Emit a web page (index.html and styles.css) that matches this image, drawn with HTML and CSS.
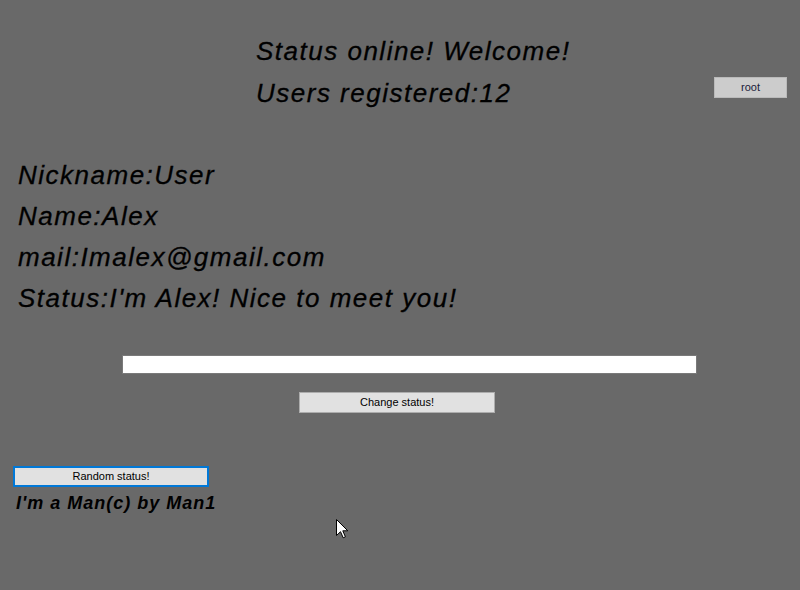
FILE: index.html
```html
<!DOCTYPE html>
<html>
<head>
<meta charset="utf-8">
<link rel="stylesheet" href="styles.css">
</head>
<body>
<div class="form">
  <div class="header">
    <div class="welcome">
      <div class="big head-line">Status online! Welcome!</div>
      <div class="big head-line">Users registered:12</div>
    </div>
    <button class="btn root">root</button>
  </div>
  <div class="info">
    <div class="big">Nickname:User</div>
    <div class="big">Name:Alex</div>
    <div class="big">mail:Imalex@gmail.com</div>
    <div class="big">Status:I'm Alex! Nice to meet you!</div>
  </div>
  <div class="status-row">
    <input class="status-input" type="text">
  </div>
  <div class="change-row">
    <button class="btn change">Change status!</button>
  </div>
  <div class="random-row">
    <button class="btn random">Random status!</button>
  </div>
  <div class="footer">I'm a Man(c) by Man1</div>
  <svg class="cursor" width="13" height="20" viewBox="0 0 13 20">
    <path d="M0.5 0.5 L0.5 16.5 L4.5 12.7 L7.2 18.8 L9.4 17.8 L6.8 11.8 L11.8 11.8 Z" fill="#fff" stroke="#000" stroke-width="1" stroke-linejoin="miter"/>
  </svg>
</div>
</body>
</html>
```
FILE: styles.css
```css
html, body {
  margin: 0;
  padding: 0;
  background: #696969;
}
.form {
  position: relative;
  width: 800px;
  height: 590px;
  background: #696969;
  font-family: "Liberation Sans", Arial, sans-serif;
  color: #000;
}
.big {
  font-size: 26px;
  font-style: italic;
  letter-spacing: 1.5px;
  line-height: 41px;
  white-space: nowrap;
  -webkit-text-stroke: 0.3px #000;
}
.head-line {
  line-height: 42px;
}
.header {
  display: flex;
  align-items: flex-start;
  padding-top: 30px;
  padding-left: 256px;
}
.btn {
  font-family: "Liberation Sans", Arial, sans-serif;
  font-size: 11px;
  color: #000;
  background: #e1e1e1;
  border: 1px solid #adadad;
  padding: 0;
  margin: 0;
  box-sizing: border-box;
  height: 21px;
  line-height: 19px;
  text-align: center;
}
.root {
  margin-left: auto;
  margin-right: 13px;
  margin-top: 47px;
  width: 73px;
  background: #cccccc;
  border-color: #bababa;
  color: #1a1a3a;
}
.info {
  margin-top: 41px;
  padding-left: 18px;
}
.status-row {
  margin-top: 36px;
  padding-left: 122px;
}
.status-input {
  display: block;
  width: 575px;
  height: 19px;
  box-sizing: border-box;
  margin: 0;
  padding: 0;
  border: 1px solid #7a7a7a;
  background: #fff;
  outline: none;
}
.change-row {
  margin-top: 18px;
  padding-left: 299px;
}
.change {
  width: 196px;
}
.random-row {
  margin-top: 53px;
  padding-left: 13px;
}
.random {
  width: 196px;
  border: 2px solid #0078d7;
  line-height: 17px;
}
.footer {
  margin-top: 5px;
  padding-left: 16px;
  font-size: 18px;
  font-weight: bold;
  font-style: italic;
  letter-spacing: 1px;
  line-height: 22px;
}
.cursor {
  position: absolute;
  left: 336px;
  top: 519px;
}
```
